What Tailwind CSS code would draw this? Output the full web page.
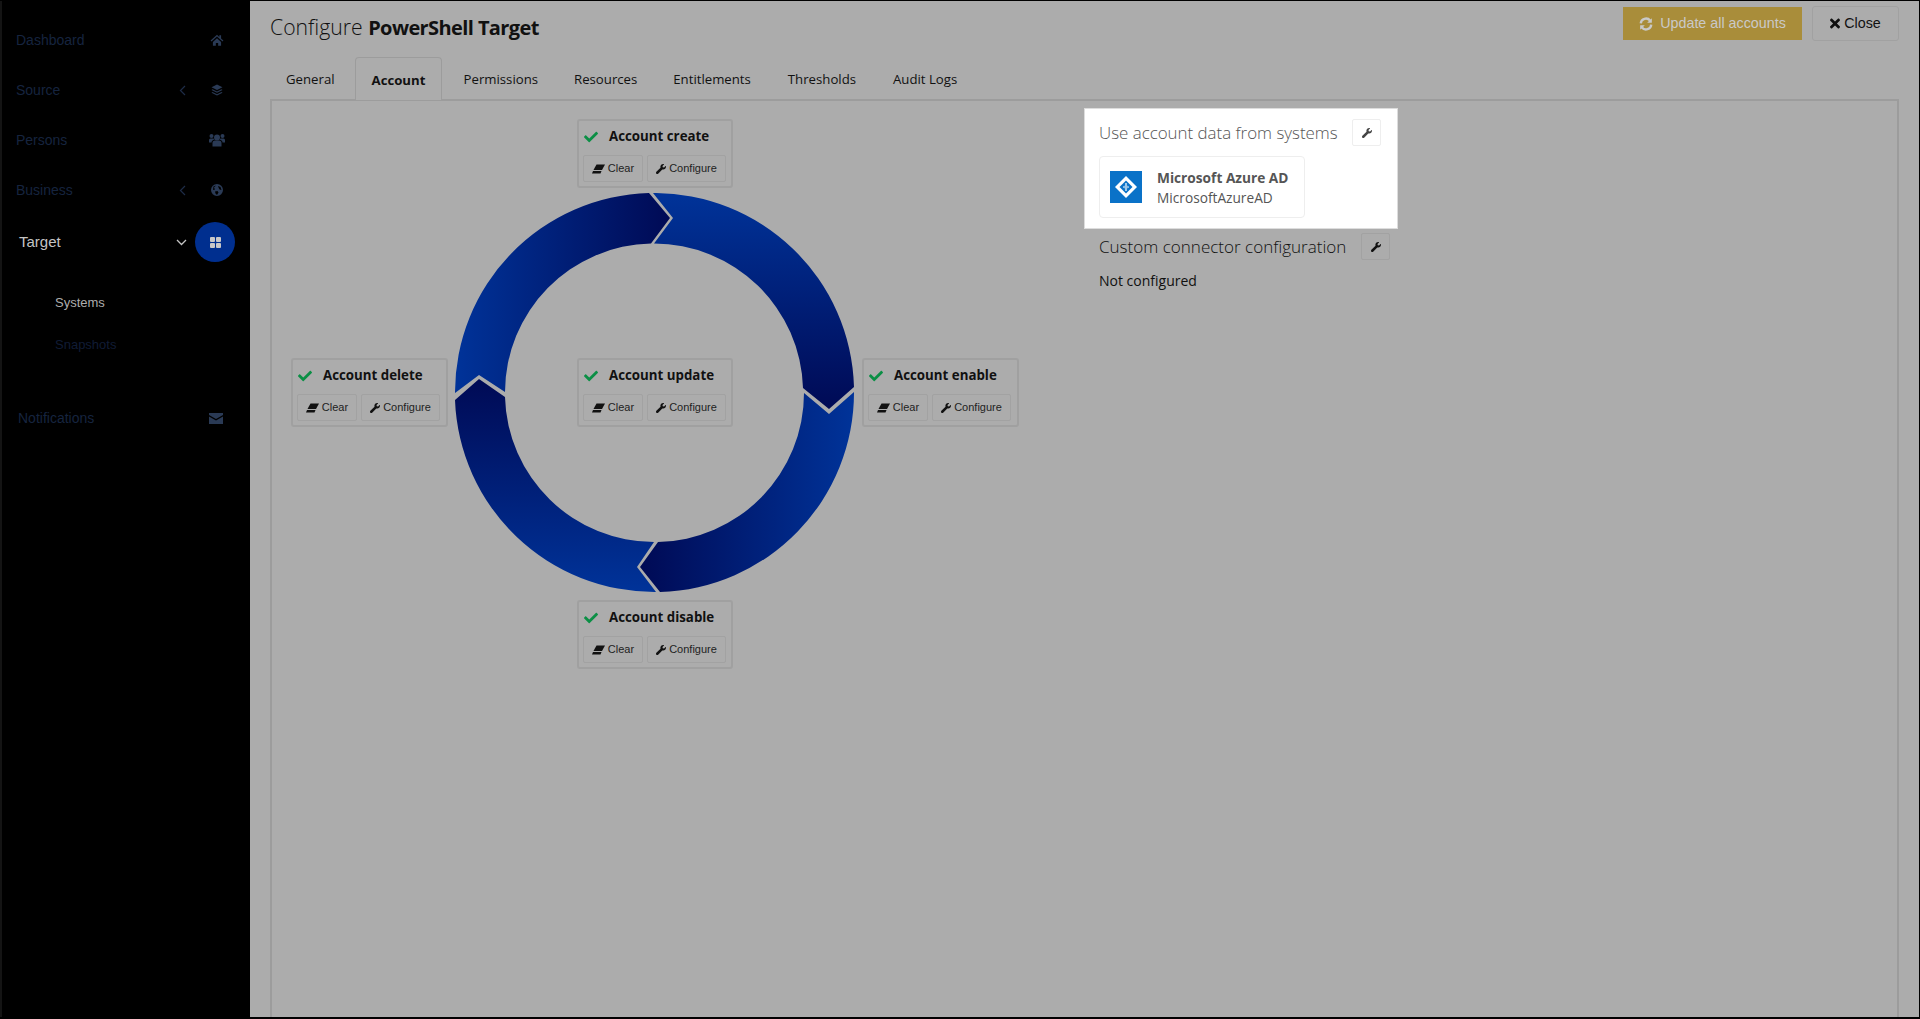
<!DOCTYPE html>
<html>
<head>
<meta charset="utf-8">
<script src="https://cdn.jsdelivr.net/npm/@tailwindcss/browser@4"></script>
<title>Configure PowerShell Target</title>
</head>
<body class="bg-black">
<svg class="hidden" width="0" height="0">
  <symbol id="check" viewBox="0 0 512 512"><path fill="currentColor" d="M173.898 439.404l-166.400-166.400c-9.997-9.997-9.997-26.206 0-36.204l36.203-36.204c9.997-9.998 26.207-9.998 36.204 0L192 312.690 432.095 72.596c9.997-9.997 26.207-9.997 36.204 0l36.203 36.204c9.997 9.997 9.997 26.206 0 36.204l-294.400 294.401c-9.998 9.997-26.207 9.997-36.204-.001z"/></symbol>
  <symbol id="wrench" viewBox="0 0 512 512"><path fill="currentColor" d="M507.730 109.100c-2.240-9.030-13.540-12.090-20.120-5.510l-74.360 74.360-67.880-11.310-11.310-67.880 74.360-74.360c6.620-6.620 3.430-17.900-5.660-20.160-47.380-11.740-99.550.91-136.580 37.930-39.640 39.640-50.550 97.100-34.050 147.200L18.740 402.760c-24.990 24.990-24.990 65.510 0 90.500 24.990 24.990 65.510 24.990 90.500 0l213.210-213.210c50.120 16.710 107.470 5.680 147.370-34.220 37.070-37.070 49.700-89.320 37.910-136.730z"/></symbol>
  <symbol id="eraser" viewBox="0 0 13 10"><path fill="currentColor" d="M4.500 0.500h8.500L10 6H1.500z"/><path fill="currentColor" d="M1 7h8.500L8.500 9.500H0z"/></symbol>
</svg>
<div class="flex w-[1920px] h-[1019px] overflow-hidden bg-black border-t border-r border-b-2 border-black font-['Open_Sans',sans-serif] text-[#111]">

  <!-- Sidebar -->
  <aside class="w-[250px] shrink-0 pt-[14px] border-l-2 border-[#141414] font-['Liberation_Sans',sans-serif] text-[14px] text-[#16243f]">
    <div class="flex items-center h-[50px] pl-[14px]"><span class="flex-1">Dashboard</span>
      <svg class="w-[14px] h-[14px] mr-[26px] text-[#2a3a55]" viewBox="0 0 24 24" fill="currentColor"><path d="M12 3 1 13l1.500 1.600L12 6l9.500 8.600L23 13l-4-3.600V4h-3v2.700zM5 15.500 12 9l7 6.500V22h-5v-5h-4v5H5z"/></svg></div>
    <div class="flex items-center h-[50px] pl-[14px]"><span class="flex-1">Source</span>
      <svg class="w-[7px] h-[11px] mr-[25px] text-[#1e2c48]" viewBox="0 0 7 11" fill="none" stroke="currentColor" stroke-width="1.200"><path d="M6 1 1.500 5.500 6 10"/></svg>
      <svg class="w-[12px] h-[12px] mr-[27px] text-[#2a3a55]" viewBox="0 0 24 24" fill="currentColor"><path d="M12 1 1 6.500 12 12l11-5.500zM3 10.500l9 4.500 9-4.500 2 1.500-11 5.500L1 12zM3 16l9 4.500 9-4.500 2 1.500L12 23 1 17.500z"/></svg></div>
    <div class="flex items-center h-[50px] pl-[14px]"><span class="flex-1">Persons</span>
      <svg class="w-[16px] h-[14px] mr-[25px] text-[#2a3a55]" viewBox="0 0 32 28" fill="currentColor"><circle cx="16" cy="9" r="6"/><circle cx="5" cy="6" r="4"/><circle cx="27" cy="6" r="4"/><path d="M7 27v-7a5 5 0 0 1 5-5h8a5 5 0 0 1 5 5v7zM0 19v-5a3 3 0 0 1 3-3h6l2 2c-4 1-6 3-6 6zM32 19v-5a3 3 0 0 0-3-3h-6l-2 2c4 1 6 3 6 6z"/></svg></div>
    <div class="flex items-center h-[50px] pl-[14px]"><span class="flex-1">Business</span>
      <svg class="w-[7px] h-[11px] mr-[25px] text-[#1e2c48]" viewBox="0 0 7 11" fill="none" stroke="currentColor" stroke-width="1.200"><path d="M6 1 1.500 5.500 6 10"/></svg>
      <svg class="w-[12px] h-[12px] mr-[27px] text-[#2a3a55]" viewBox="0 0 24 24" fill="currentColor"><path d="M12 0a12 12 0 1 0 0 24 12 12 0 0 0 0-24zM10 3 6 7l2 4-4 1 1-7zM14 4l5 2 2 6-4-1-2-4zM8 15l5-1 2 3-3 5-3-3z"/></svg></div>
    <div class="flex items-center h-[50px] pl-[17px] mt-[2px] text-[15px] text-[#c4c4c4]"><span class="flex-1">Target</span>
      <svg class="w-[11px] h-[7px] mr-[8px] text-[#c4c4c4]" viewBox="0 0 11 7" fill="none" stroke="currentColor" stroke-width="1.300"><path d="M1 1l4.500 4.500L10 1"/></svg>
      <div class="w-[40px] h-[40px] mr-[15px] rounded-full bg-[#002f8f] flex items-center justify-center">
        <svg class="w-[11px] h-[11px] text-[#c8c8c8]" viewBox="0 0 11 11" fill="currentColor"><rect width="5" height="5" rx="1"/><rect x="6" width="5" height="5" rx="1"/><rect y="6" width="5" height="5" rx="1"/><rect x="6" y="6" width="5" height="5" rx="1"/></svg>
      </div></div>
    <div class="mt-[15px] pl-[53px] text-[13px]">
      <div class="h-[42px] flex items-center text-[#adadad]">Systems</div>
      <div class="h-[42px] flex items-center text-[#101c35]">Snapshots</div>
    </div>
    <div class="flex items-center h-[50px] pl-[16px] mt-[27px]"><span class="flex-1">Notifications</span>
      <svg class="w-[14px] h-[11px] mr-[27px] text-[#2a3a55]" viewBox="0 0 14 11" fill="currentColor"><path d="M0 0h14v2L7 6 0 2zM0 3.500 7 7.500l7-4V11H0z"/></svg></div>
  </aside>

  <!-- Main -->
  <main class="flex-1 min-w-0 bg-[#acacac] flex flex-col pl-[20px]">
    <header class="flex items-start h-[56px] pr-[20px]">
      <h1 class="text-[21.200px] leading-[30px] mt-[11px] font-light">Configure <span class="font-bold text-[20px] tracking-[-0.6px]">PowerShell Target</span></h1>
      <div class="ml-auto flex items-start mt-[5px] font-['Liberation_Sans',sans-serif] text-[14.300px]">
        <button class="flex items-center justify-center gap-[7px] w-[179px] h-[33px] mt-px bg-[#a98d3a] text-[#c9c9c9]">
          <svg class="w-[14px] h-[14px]" viewBox="0 0 24 24" fill="none" stroke="currentColor" stroke-width="4"><path d="M3 11a9 9 0 0 1 16-5M21 13a9 9 0 0 1-16 5"/><path d="M22 2v8h-8zM2 22v-8h8z" fill="currentColor" stroke="none"/></svg>
          Update all accounts</button>
        <button class="flex items-center justify-center gap-[4px] w-[87px] h-[35px] ml-[10px] border border-[#a1a1a1] rounded-[3px] text-[#111]">
          <svg class="w-[10px] h-[15px]" viewBox="0 0 352 512" fill="currentColor"><path d="M242.720 256l100.070-100.070c12.280-12.280 12.280-32.190 0-44.480l-22.240-22.240c-12.280-12.280-32.190-12.280-44.480 0L176 189.280 75.930 89.210c-12.280-12.280-32.190-12.280-44.480 0L9.210 111.450c-12.280 12.280-12.280 32.190 0 44.480L109.280 256 9.210 356.070c-12.280 12.280-12.280 32.190 0 44.480l22.240 22.240c12.280 12.280 32.200 12.280 44.480 0L176 322.720l100.070 100.070c12.280 12.280 32.200 12.280 44.480 0l22.240-22.240c12.280-12.280 12.280-32.190 0-44.480L242.720 256z"/></svg>
          Close</button>
      </div>
    </header>

    <!-- Tabs -->
    <nav class="flex h-[43px] text-[13.200px] -mb-px relative">
      <a class="pl-[16px] pr-[19px] leading-[45px]">General</a>
      <a class="px-[16px] leading-[44px] font-bold border border-b-0 border-[#9c9c9c] rounded-t-[4px] bg-[#acacac] w-[87px] ml-[1px]">Account</a>
      <a class="pl-[22px] pr-[18px] leading-[45px]">Permissions</a>
      <a class="px-[18px] leading-[45px]">Resources</a>
      <a class="pl-[18px] pr-[19px] leading-[45px]">Entitlements</a>
      <a class="pl-[18px] pr-[19px] leading-[45px]">Thresholds</a>
      <a class="px-[18px] leading-[45px]">Audit Logs</a>
    </nav>

    <!-- Panel -->
    <section class="flex-1 flex border-2 border-b-0 border-[#9c9c9c] mr-[20px] pl-[19px]">
      <div class="relative w-[727px] h-[550px] mt-[18px] shrink-0">
        <svg class="absolute left-[164px] top-[74px] w-[400px] h-[400px]" viewBox="455 193 400 400">
          <defs>
            <linearGradient id="g1" gradientUnits="userSpaceOnUse" x1="455" y1="0" x2="670" y2="0"><stop offset="0" stop-color="#003399"/><stop offset="1" stop-color="#000a55"/></linearGradient>
            <linearGradient id="g2" gradientUnits="userSpaceOnUse" x1="0" y1="193" x2="0" y2="409"><stop offset="0" stop-color="#003399"/><stop offset="1" stop-color="#000a55"/></linearGradient>
            <linearGradient id="g3" gradientUnits="userSpaceOnUse" x1="854" y1="0" x2="640" y2="0"><stop offset="0" stop-color="#003399"/><stop offset="1" stop-color="#000a55"/></linearGradient>
            <linearGradient id="g4" gradientUnits="userSpaceOnUse" x1="0" y1="592" x2="0" y2="379"><stop offset="0" stop-color="#003399"/><stop offset="1" stop-color="#000a55"/></linearGradient>
          </defs>
          <path fill="url(#g1)" d="M455 393A199.500 199.500 0 0 1 649 193L670 218L651 243.500A149 149 0 0 0 505 392L479 375Z"/>
          <path fill="url(#g2)" d="M653 193A199.500 199.500 0 0 1 854 387L829 409L803 388A149 149 0 0 0 654 243.500L673 218Z"/>
          <path fill="url(#g3)" d="M854 392A199.500 199.500 0 0 1 660 592L640 567L658 542A149 149 0 0 0 804 393L829 414Z"/>
          <path fill="url(#g4)" d="M656 592A199.500 199.500 0 0 1 455 400L479 379L505 397A149 149 0 0 0 654 542L637 567Z"/>
        </svg>

        <!-- Nodes -->
        <div class="absolute left-[286px] top-0 w-[156px] h-[69px] border-2 border-[#a0a0a0] rounded-[3px]">
          <div class="flex items-center h-[31px] pl-[5px]"><svg class="w-[14px] h-[14px] mr-[11px] text-[#0b8f45]"><use href="#check"/></svg><span class="font-bold text-[13.300px]">Account create</span></div>
          <div class="flex gap-[4px] pl-[4px] mt-[3px] font-['Liberation_Sans',sans-serif] text-[11px] text-[#222]">
            <button class="flex items-center justify-center gap-[3px] w-[60px] h-[27px] border border-[#a2a2a2] rounded-[2px]"><svg class="w-[13px] h-[10px] text-[#111]"><use href="#eraser"/></svg>Clear</button>
            <button class="flex items-center justify-center gap-[3px] w-[79px] h-[27px] border border-[#a2a2a2] rounded-[2px]"><svg class="w-[10px] h-[10px] text-[#111]"><use href="#wrench"/></svg>Configure</button>
          </div>
        </div>
        <div class="absolute left-0 top-[239px] w-[157px] h-[69px] border-2 border-[#a0a0a0] rounded-[3px]">
          <div class="flex items-center h-[31px] pl-[5px]"><svg class="w-[14px] h-[14px] mr-[11px] text-[#0b8f45]"><use href="#check"/></svg><span class="font-bold text-[13.300px]">Account delete</span></div>
          <div class="flex gap-[4px] pl-[4px] mt-[3px] font-['Liberation_Sans',sans-serif] text-[11px] text-[#222]">
            <button class="flex items-center justify-center gap-[3px] w-[60px] h-[27px] border border-[#a2a2a2] rounded-[2px]"><svg class="w-[13px] h-[10px] text-[#111]"><use href="#eraser"/></svg>Clear</button>
            <button class="flex items-center justify-center gap-[3px] w-[79px] h-[27px] border border-[#a2a2a2] rounded-[2px]"><svg class="w-[10px] h-[10px] text-[#111]"><use href="#wrench"/></svg>Configure</button>
          </div>
        </div>
        <div class="absolute left-[286px] top-[239px] w-[156px] h-[69px] border-2 border-[#a0a0a0] rounded-[3px]">
          <div class="flex items-center h-[31px] pl-[5px]"><svg class="w-[14px] h-[14px] mr-[11px] text-[#0b8f45]"><use href="#check"/></svg><span class="font-bold text-[13.300px]">Account update</span></div>
          <div class="flex gap-[4px] pl-[4px] mt-[3px] font-['Liberation_Sans',sans-serif] text-[11px] text-[#222]">
            <button class="flex items-center justify-center gap-[3px] w-[60px] h-[27px] border border-[#a2a2a2] rounded-[2px]"><svg class="w-[13px] h-[10px] text-[#111]"><use href="#eraser"/></svg>Clear</button>
            <button class="flex items-center justify-center gap-[3px] w-[79px] h-[27px] border border-[#a2a2a2] rounded-[2px]"><svg class="w-[10px] h-[10px] text-[#111]"><use href="#wrench"/></svg>Configure</button>
          </div>
        </div>
        <div class="absolute left-[571px] top-[239px] w-[157px] h-[69px] border-2 border-[#a0a0a0] rounded-[3px]">
          <div class="flex items-center h-[31px] pl-[5px]"><svg class="w-[14px] h-[14px] mr-[11px] text-[#0b8f45]"><use href="#check"/></svg><span class="font-bold text-[13.300px]">Account enable</span></div>
          <div class="flex gap-[4px] pl-[4px] mt-[3px] font-['Liberation_Sans',sans-serif] text-[11px] text-[#222]">
            <button class="flex items-center justify-center gap-[3px] w-[60px] h-[27px] border border-[#a2a2a2] rounded-[2px]"><svg class="w-[13px] h-[10px] text-[#111]"><use href="#eraser"/></svg>Clear</button>
            <button class="flex items-center justify-center gap-[3px] w-[79px] h-[27px] border border-[#a2a2a2] rounded-[2px]"><svg class="w-[10px] h-[10px] text-[#111]"><use href="#wrench"/></svg>Configure</button>
          </div>
        </div>
        <div class="absolute left-[286px] top-[481px] w-[156px] h-[69px] border-2 border-[#a0a0a0] rounded-[3px]">
          <div class="flex items-center h-[31px] pl-[5px]"><svg class="w-[14px] h-[14px] mr-[11px] text-[#0b8f45]"><use href="#check"/></svg><span class="font-bold text-[13.300px]">Account disable</span></div>
          <div class="flex gap-[4px] pl-[4px] mt-[3px] font-['Liberation_Sans',sans-serif] text-[11px] text-[#222]">
            <button class="flex items-center justify-center gap-[3px] w-[60px] h-[27px] border border-[#a2a2a2] rounded-[2px]"><svg class="w-[13px] h-[10px] text-[#111]"><use href="#eraser"/></svg>Clear</button>
            <button class="flex items-center justify-center gap-[3px] w-[79px] h-[27px] border border-[#a2a2a2] rounded-[2px]"><svg class="w-[10px] h-[10px] text-[#111]"><use href="#wrench"/></svg>Configure</button>
          </div>
        </div>
      </div>

      <!-- Right column -->
      <div class="ml-[66px] mt-[7px] w-[314px]">
        <div class="bg-white px-[14px] pt-[10px] h-[121px] border border-[#ddd]">
          <div class="flex items-center h-[27px]"><span class="text-[16.900px] font-light text-[#555] whitespace-nowrap flex-1">Use account data from systems</span>
            <button class="w-[29px] h-[27px] mr-[2px] border border-[#eee] rounded-[2px] flex items-center justify-center shrink-0"><svg class="w-[10px] h-[10px] text-[#444]"><use href="#wrench"/></svg></button></div>
          <div class="mt-[10px] w-[206px] h-[62px] border border-[#eee] rounded-[4px] flex items-center pl-[10px]">
            <svg class="w-[32px] h-[32px] shrink-0" viewBox="0 0 32 32"><rect width="32" height="32" fill="#0a72c8"/><path d="M16 5 27 16 16 27 5 16z" fill="#fff"/><path d="M16 9.500 22.500 16 16 22.500 9.500 16z" fill="#0a72c8"/><rect x="15.400" y="12" width="1.200" height="8" fill="#fff"/><path d="M14.500 14.500v3L13 16zM17.500 14.500v3L19 16z" fill="#fff"/></svg>
            <div class="ml-[15px] text-[13.700px] leading-[20px] text-[#555]"><div class="font-bold mt-px">Microsoft Azure AD</div><div>MicrosoftAzureAD</div></div>
          </div>
        </div>
        <div class="flex items-center h-[27px] mt-[4px] px-[15px]"><span class="text-[17.050px] font-light whitespace-nowrap">Custom connector configuration</span>
          <button class="w-[29px] h-[27px] ml-[15px] border border-[#a2a2a2] rounded-[2px] flex items-center justify-center shrink-0"><svg class="w-[10px] h-[10px] text-[#111]"><use href="#wrench"/></svg></button></div>
        <div class="px-[15px] mt-[9px] text-[14px] leading-[24px]">Not configured</div>
      </div>
    </section>
  </main>
</div>
</body>
</html>
